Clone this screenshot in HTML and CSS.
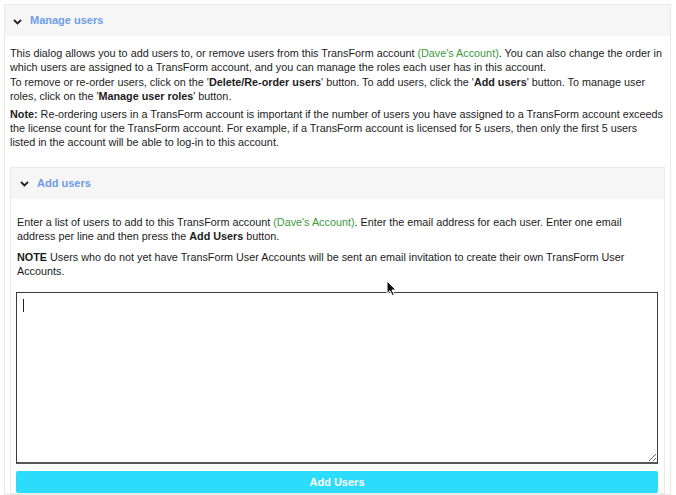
FILE: index.html
```html
<!DOCTYPE html>
<html lang="en">
<head>
<meta charset="utf-8">
<title>Manage users</title>
<link rel="stylesheet" href="styles.css">
</head>
<body>
<div class="panel outer">
  <div class="panel-head">
    <svg class="chev" width="9" height="6" viewBox="0 0 9 6"><path d="M1 1 L4.5 4.5 L8 1" fill="none" stroke="#222" stroke-width="1.8"/></svg>
    <span class="panel-title">Manage users</span>
  </div>
  <div class="panel-body">
    <p>This dialog allows you to add users to, or remove users from this TransForm account <span class="acct">(Dave's Account)</span>. You can also change the order in which users are assigned to a TransForm account, and you can manage the roles each user has in this account.<br>To remove or re-order users, click on the '<b>Delete/Re-order users</b>' button. To add users, click the '<b>Add users</b>' button. To manage user roles, click on the '<b>Manage user roles</b>' button.</p>
    <p><b>Note:</b> Re-ordering users in a TransForm account is important if the number of users you have assigned to a TransForm account exceeds the license count for the TransForm account. For example, if a TransForm account is licensed for 5 users, then only the first 5 users listed in the account will be able to log-in to this account.</p>

    <div class="panel inner">
      <div class="panel-head">
        <svg class="chev" width="9" height="6" viewBox="0 0 9 6"><path d="M1 1 L4.5 4.5 L8 1" fill="none" stroke="#222" stroke-width="1.8"/></svg>
        <span class="panel-title">Add users</span>
      </div>
      <div class="panel-body inner-body">
        <p>Enter a list of users to add to this TransForm account <span class="acct">(Dave's Account)</span>. Enter the email address for each user. Enter one email address per line and then press the <b>Add Users</b> button.</p>
        <p><b>NOTE</b> Users who do not yet have TransForm User Accounts will be sent an email invitation to create their own TransForm User Accounts.</p>
        <div class="input-wrap">
          <textarea class="emails"></textarea>
          <span class="caret"></span>
        </div>
        <button class="add-btn">Add Users</button>
      </div>
    </div>
  </div>
</div>
<svg class="pointer" width="12" height="17" viewBox="0 0 12 17"><path d="M1 1 L1 13.5 L4 10.8 L6.2 15.6 L8.2 14.7 L6 10 L10 10 Z" fill="#111" stroke="#fff" stroke-width="1"/></svg>
</body>
</html>
```
FILE: styles.css
```css
html, body {
  margin: 0;
  padding: 0;
  background: #ffffff;
}
body {
  font-family: "Liberation Sans", Arial, sans-serif;
  font-size: 10.8px;
  line-height: 14.4px;
  color: #1c1c1c;
  padding: 4px 5px 0 4px;
  position: relative;
  height: 495px;
  box-sizing: border-box;
  overflow: hidden;
}
.panel {
  border: 1px solid #e9e9e9;
  background: #fff;
}
.panel-head {
  height: 31px;
  background: #f6f6f6;
  display: flex;
  align-items: center;
  gap: 8px;
  padding-left: 8px;
}
.chev {
  display: block;
  margin-top: 2px;
}
.panel-title {
  color: #6e9de8;
  font-weight: bold;
  font-size: 11px;
}
.panel-body {
  padding: 10px 5px 0 5px;
}
.panel-body p {
  margin: 0 0 3px 0;
}
.acct {
  color: #3c9a3c;
}
.inner {
  margin: 17px 0 0 0;
}
.inner .panel-head {
  padding-left: 9px;
}
.inner-body {
  padding: 16px 6px 0 5px;
}
.inner-body p {
  margin: 0 0 6px 1px;
}
.input-wrap {
  position: relative;
  margin-top: 14px;
}
.emails {
  display: block;
  width: 100%;
  height: 172px;
  box-sizing: border-box;
  border: 1px solid #3a3a3a;
  border-bottom: 2px solid #555;
  border-radius: 0;
  margin: 0;
  padding: 4px;
  font: inherit;
  resize: vertical;
  outline: none;
}
.caret {
  position: absolute;
  left: 7px;
  top: 7px;
  width: 1px;
  height: 13px;
  background: #222;
}
.add-btn {
  display: block;
  width: 100%;
  height: 22px;
  margin-top: 7px;
  border: none;
  border-radius: 2px;
  background: #2ddcfb;
  color: #fff;
  font-family: "Liberation Sans", Arial, sans-serif;
  font-weight: bold;
  font-size: 11px;
  padding: 0;
}
.pointer {
  position: absolute;
  left: 386px;
  top: 280px;
}
```
